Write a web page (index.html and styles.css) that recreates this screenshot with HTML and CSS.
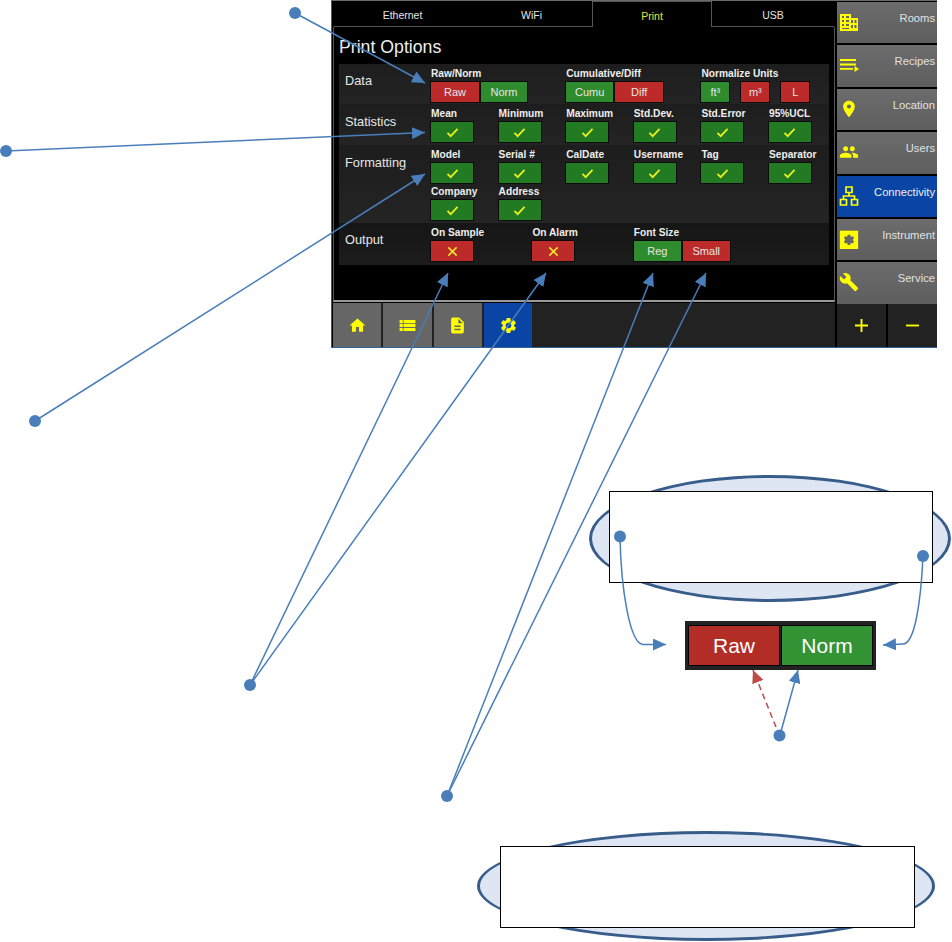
FILE: index.html
```html
<!DOCTYPE html>
<html lang="en">
<head>
    <meta charset="UTF-8">
    <meta name="viewport" content="width=device-width, initial-scale=1.0">
    <title>Print Options</title>
    <link rel="stylesheet" href="styles.css">
</head>
<body>
    <svg class="defs" width="0" height="0">
        <symbol id="i-check" viewBox="0 0 14 12"><path d="M1.500 6.500 5 10 12.500 2" fill="none" stroke="#e8f020" stroke-width="2"/></symbol>
        <symbol id="i-cross" viewBox="0 0 12 12"><path d="M1.500 1.500 10.500 10.500M10.500 1.500 1.500 10.500" fill="none" stroke="#f4e62a" stroke-width="1.700"/></symbol>
    </svg>

    <div class="canvas">
        <section class="screen">
            <div class="main">
                <nav class="tabs">
                    <div class="tab tab-first">Ethernet</div>
                    <div class="tab">WiFi</div>
                    <div class="tab tab-active">Print</div>
                    <div class="tab tab-last">USB</div>
                </nav>

                <div class="content">
                    <h1 class="title">Print Options</h1>
                    <div class="panel">
                        <div class="row row-data">
                            <div class="row-label">Data</div>
                            <div class="options">
                                <div class="opt span-4">
                                    <div class="opt-label">Raw/Norm</div>
                                    <div class="btn-group">
                                        <div class="btn red w48">Raw</div>
                                        <div class="btn green w46">Norm</div>
                                    </div>
                                </div>
                                <div class="opt span-4">
                                    <div class="opt-label">Cumulative/Diff</div>
                                    <div class="btn-group">
                                        <div class="btn green w47">Cumu</div>
                                        <div class="btn red w48">Diff</div>
                                    </div>
                                </div>
                                <div class="opt span-4">
                                    <div class="opt-label">Normalize Units</div>
                                    <div class="btn-group wide">
                                        <div class="btn green w28">ft³</div>
                                        <div class="btn red w28">m³</div>
                                        <div class="btn red w28">L</div>
                                    </div>
                                </div>
                            </div>
                        </div>

                        <div class="row">
                            <div class="row-label">Statistics</div>
                            <div class="options">
                                <div class="opt span-2"><div class="opt-label">Mean</div><div class="btn green w42"><svg class="mark"><use href="#i-check"/></svg></div></div>
                                <div class="opt span-2"><div class="opt-label">Minimum</div><div class="btn green w42"><svg class="mark"><use href="#i-check"/></svg></div></div>
                                <div class="opt span-2"><div class="opt-label">Maximum</div><div class="btn green w42"><svg class="mark"><use href="#i-check"/></svg></div></div>
                                <div class="opt span-2"><div class="opt-label">Std.Dev.</div><div class="btn green w42"><svg class="mark"><use href="#i-check"/></svg></div></div>
                                <div class="opt span-2"><div class="opt-label">Std.Error</div><div class="btn green w42"><svg class="mark"><use href="#i-check"/></svg></div></div>
                                <div class="opt span-2"><div class="opt-label">95%UCL</div><div class="btn green w42"><svg class="mark"><use href="#i-check"/></svg></div></div>
                            </div>
                        </div>

                        <div class="row">
                            <div class="row-label">Formatting</div>
                            <div class="options">
                                <div class="opt span-2"><div class="opt-label">Model</div><div class="btn green w42"><svg class="mark"><use href="#i-check"/></svg></div></div>
                                <div class="opt span-2"><div class="opt-label">Serial #</div><div class="btn green w42"><svg class="mark"><use href="#i-check"/></svg></div></div>
                                <div class="opt span-2"><div class="opt-label">CalDate</div><div class="btn green w42"><svg class="mark"><use href="#i-check"/></svg></div></div>
                                <div class="opt span-2"><div class="opt-label">Username</div><div class="btn green w42"><svg class="mark"><use href="#i-check"/></svg></div></div>
                                <div class="opt span-2"><div class="opt-label">Tag</div><div class="btn green w42"><svg class="mark"><use href="#i-check"/></svg></div></div>
                                <div class="opt span-2"><div class="opt-label">Separator</div><div class="btn green w42"><svg class="mark"><use href="#i-check"/></svg></div></div>
                                <div class="opt span-2"><div class="opt-label">Company</div><div class="btn green w42"><svg class="mark"><use href="#i-check"/></svg></div></div>
                                <div class="opt span-2"><div class="opt-label">Address</div><div class="btn green w42"><svg class="mark"><use href="#i-check"/></svg></div></div>
                            </div>
                        </div>

                        <div class="row row-output">
                            <div class="row-label">Output</div>
                            <div class="options">
                                <div class="opt span-3"><div class="opt-label">On Sample</div><div class="btn red w42"><svg class="mark"><use href="#i-cross"/></svg></div></div>
                                <div class="opt span-3"><div class="opt-label">On Alarm</div><div class="btn red w42"><svg class="mark"><use href="#i-cross"/></svg></div></div>
                                <div class="opt span-6">
                                    <div class="opt-label">Font Size</div>
                                    <div class="btn-group">
                                        <div class="btn green w47">Reg</div>
                                        <div class="btn red w47">Small</div>
                                    </div>
                                </div>
                            </div>
                        </div>
                    </div>
                </div>

                <div class="bottom-bar">
                    <div class="bar-btn"><svg class="icon" viewBox="0 0 24 24"><path d="M10 20v-6h4v6h5v-8h3L12 3 2 12h3v8z"/></svg></div>
                    <div class="bar-btn"><svg class="icon" viewBox="0 0 24 24"><path d="M2 14h4v-4H2v4zm0 5h4v-4H2v4zM2 9h4V5H2v4zm5 5h15v-4H7v4zm0 5h15v-4H7v4zM7 5v4h15V5H7z"/></svg></div>
                    <div class="bar-btn"><svg class="icon" viewBox="0 0 24 24"><path d="M14 2H6c-1.100 0-1.990.9-1.990 2L4 20c0 1.100.89 2 1.990 2H18c1.100 0 2-.9 2-2V8l-6-6zm2 16H8v-2h8v2zm0-4H8v-2h8v2zm-3-5V3.500L18.500 9H13z"/></svg></div>
                    <div class="bar-btn blue"><svg class="icon" viewBox="0 0 24 24"><path d="M19.140 12.940c.04-.3.06-.61.06-.94 0-.32-.02-.64-.07-.94l2.030-1.580a.49.49 0 0 0 .12-.61l-1.920-3.320a.488.488 0 0 0-.59-.22l-2.390.96c-.5-.38-1.030-.7-1.620-.94l-.36-2.540a.484.484 0 0 0-.48-.41h-3.840c-.24 0-.43.17-.47.41l-.36 2.540c-.59.24-1.130.57-1.620.94l-2.390-.96c-.22-.08-.47 0-.59.22L2.740 8.870c-.12.21-.08.47.12.61l2.030 1.580c-.05.3-.09.63-.09.94s.02.64.07.94l-2.030 1.580a.49.49 0 0 0-.12.61l1.920 3.320c.12.22.37.29.59.22l2.390-.96c.5.38 1.030.7 1.620.94l.36 2.540c.05.24.24.41.48.41h3.840c.24 0 .44-.17.47-.41l.36-2.540c.59-.24 1.130-.56 1.620-.94l2.390.96c.22.08.47 0 .59-.22l1.920-3.320c.12-.22.07-.47-.12-.61l-2.010-1.580zM12 15.600c-1.980 0-3.600-1.620-3.600-3.600s1.620-3.600 3.600-3.600 3.600 1.620 3.600 3.600-1.620 3.600-3.600 3.600z"/></svg></div>
                </div>
            </div>

            <aside class="sidebar">
                <div class="side-item">
                    <svg class="side-icon" viewBox="0 0 20 20"><path fill-rule="evenodd" d="M1 2h11v4h7v13H1zM3 4v2h2V4zm4 0v2h3V4zM3 8v2h2V8zm4 0v2h3V8zM3 12v2h2v-2zm4 0v2h3v-2zm5-4v3h2V8zm3.500 0v3h2V8zm-3.500 5v3h2v-3zm3.500 0v3h2v-3zM3 17h7v-1H3z"/></svg>
                    <span class="side-label">Rooms</span>
                </div>
                <div class="side-item">
                    <svg class="side-icon" viewBox="0 0 20 20"><path d="M1 4h16v2H1zM1 8.500h16v2H1zM1 13h13v1.700H1zM15.500 11l4.500 3-4.500 3z"/></svg>
                    <span class="side-label">Recipes</span>
                </div>
                <div class="side-item">
                    <svg class="side-icon" viewBox="0 0 24 24"><path d="M12 2C8.130 2 5 5.130 5 9c0 5.250 7 13 7 13s7-7.750 7-13c0-3.870-3.130-7-7-7zm0 9.500a2.500 2.500 0 0 1 0-5 2.500 2.500 0 0 1 0 5z"/></svg>
                    <span class="side-label">Location</span>
                </div>
                <div class="side-item">
                    <svg class="side-icon" viewBox="0 0 24 24"><path d="M16 11c1.660 0 2.990-1.340 2.990-3S17.660 5 16 5c-1.660 0-3 1.340-3 3s1.340 3 3 3zm-8 0c1.660 0 2.990-1.340 2.990-3S9.660 5 8 5C6.340 5 5 6.340 5 8s1.340 3 3 3zm0 2c-2.330 0-7 1.170-7 3.500V19h14v-2.500c0-2.330-4.670-3.500-7-3.500zm8 0c-.29 0-.62.02-.97.05 1.160.84 1.970 1.970 1.970 3.450V19h6v-2.500c0-2.330-4.670-3.500-7-3.500z"/></svg>
                    <span class="side-label">Users</span>
                </div>
                <div class="side-item blue">
                    <svg class="side-icon" viewBox="0 0 20 20"><path fill="none" stroke="#ff0" stroke-width="1.700" d="M7 1h6v5.500H7zM1.500 13.500h6V19h-6zM12.500 13.500h6V19h-6zM10 6.500V10M4.500 13.500V10h11v3.500"/></svg>
                    <span class="side-label">Connectivity</span>
                </div>
                <div class="side-item">
                    <svg class="side-icon" viewBox="0 0 24 24">
                        <path d="M1 2h22v22H1z"/>
                        <path fill="#666" transform="translate(4.200 5.200) scale(.65)" d="M19.140 12.940c.04-.3.06-.61.06-.94 0-.32-.02-.64-.07-.94l2.030-1.580a.49.49 0 0 0 .12-.61l-1.920-3.320a.488.488 0 0 0-.59-.22l-2.390.96c-.5-.38-1.030-.7-1.620-.94l-.36-2.540a.484.484 0 0 0-.48-.41h-3.840c-.24 0-.43.17-.47.41l-.36 2.540c-.59.24-1.130.57-1.620.94l-2.390-.96c-.22-.08-.47 0-.59.22L2.740 8.870c-.12.21-.08.47.12.61l2.030 1.580c-.05.3-.09.63-.09.94s.02.64.07.94l-2.030 1.580a.49.49 0 0 0-.12.61l1.920 3.320c.12.22.37.29.59.22l2.390-.96c.5.38 1.030.7 1.620.94l.36 2.540c.05.24.24.41.48.41h3.840c.24 0 .44-.17.47-.41l.36-2.540c.59-.24 1.130-.56 1.620-.94l2.390.96c.22.08.47 0 .59-.22l1.920-3.320c.12-.22.07-.47-.12-.61l-2.010-1.580z"/>
                    </svg>
                    <span class="side-label">Instrument</span>
                </div>
                <div class="side-item">
                    <svg class="side-icon" viewBox="0 0 24 24"><path d="M22.700 19l-9.100-9.100c.9-2.300.4-5-1.500-6.900-2-2-5-2.400-7.400-1.300L9 6 6 9 1.600 4.700C.4 7.100.9 10.100 2.900 12.100c1.900 1.900 4.600 2.400 6.900 1.500l9.100 9.100c.4.4 1 .4 1.400 0l2.300-2.300c.5-.4.5-1.100.1-1.400z"/></svg>
                    <span class="side-label">Service</span>
                </div>
                <div class="zoom-btns">
                    <div class="zoom-btn"><svg class="zoom-icon" viewBox="0 0 14 14"><path d="M6 0h2v6h6v2H8v6H6V8H0V6h6z"/></svg></div>
                    <div class="zoom-btn"><svg class="zoom-icon" viewBox="0 0 14 14"><path d="M0 6h14v2H0z"/></svg></div>
                </div>
            </aside>
        </section>

        <div class="callout callout-top"><div class="callout-box box-top"></div></div>
        <div class="callout callout-bottom"><div class="callout-box box-bottom"></div></div>

        <div class="toggle-sample">
            <div class="big-btn big-red">Raw</div>
            <div class="big-btn big-green">Norm</div>
        </div>

        <svg class="arrows" viewBox="0 0 952 942">
            <defs>
                <marker id="head" markerUnits="userSpaceOnUse" markerWidth="13" markerHeight="12" refX="13" refY="6" orient="auto"><path d="M0 0 13 6 0 12z" fill="#4a7ebb"/></marker>
                <marker id="head-red" markerUnits="userSpaceOnUse" markerWidth="13" markerHeight="12" refX="13" refY="6" orient="auto"><path d="M0 0 13 6 0 12z" fill="#be4b48"/></marker>
            </defs>
            <g class="leader">
                <path d="M295 13 425 83" marker-end="url(#head)"/>
                <path d="M6 151 425 132.500" marker-end="url(#head)"/>
                <path d="M35 421 425 174" marker-end="url(#head)"/>
                <path d="M250 685 448 273" marker-end="url(#head)"/>
                <path d="M250 685 546 273" marker-end="url(#head)"/>
                <path d="M447 796 653 273" marker-end="url(#head)"/>
                <path d="M447 796 706 273" marker-end="url(#head)"/>
                <path d="M620 537C621 590 630 644 643 644.500L666 644.500" marker-end="url(#head)"/>
                <path d="M923 556C921 600 915 644 903 644L883 645" marker-end="url(#head)"/>
                <path d="M780 735 798 670" marker-end="url(#head)"/>
            </g>
            <path class="leader-red" d="M776 727 753 670" marker-end="url(#head-red)"/>
            <g class="dots">
                <circle cx="295" cy="13" r="6"/>
                <circle cx="6" cy="151" r="6"/>
                <circle cx="35" cy="421" r="6"/>
                <circle cx="250" cy="685" r="6"/>
                <circle cx="447" cy="796" r="6"/>
                <circle cx="620" cy="536.500" r="6"/>
                <circle cx="923" cy="556" r="6"/>
                <circle cx="779.500" cy="735.500" r="6"/>
            </g>
        </svg>
    </div>
</body>
</html>
```

FILE: styles.css
```css
/* General */
* {
    margin: 0;
    padding: 0;
    box-sizing: border-box;
    font-family: 'Liberation Sans', Arial, sans-serif;
}

body {
    background: #fff;
    overflow: hidden;
}

.defs {
    position: absolute;
}

.canvas {
    position: relative;
    width: 952px;
    height: 942px;
    overflow: hidden;
}

/* Device screen */
.screen {
    position: absolute;
    left: 331px;
    top: 0;
    width: 606px;
    height: 348px;
    display: flex;
    background: #000;
    border-left: 1px solid #2f6192;
    border-top: 1px solid #6a6a6a;
    border-bottom: 1px solid #2f6192;
    color: #fff;
}

.main {
    width: 502px;
    margin-left: 1px;
    display: flex;
    flex-direction: column;
}

/* Tabs */
.tabs {
    display: flex;
    height: 26px;
    flex-shrink: 0;
    padding-left: 1px;
}

.tab {
    width: 121px;
    padding-top: 8px;
    text-align: center;
    font-size: 10.500px;
    color: #e4e4e4;
    border-bottom: 1px solid #555;
}

.tab-first {
    width: 137px;
}

.tab-active {
    width: 120px;
    color: #e8e83a;
    border: 1px solid #555;
    border-bottom: none;
}

.tab-last {
    width: 122px;
}

.content {
    height: 275px;
    padding: 0 4px 0 5px;
    border-left: 1px solid #555;
    border-right: 1px solid #555;
    border-bottom: 2px solid #999;
}

.title {
    height: 37px;
    padding-top: 10px;
    font-size: 17.700px;
    line-height: 20px;
    font-weight: normal;
    color: #eee;
}

/* Options panel */
.panel {
    width: 490px;
    background: #1f1f1f;
}

.row {
    display: flex;
    padding: 4px 0 3px;
    background: linear-gradient(to bottom, #1d1d1d, #242424);
}

.row-data {
    padding-bottom: 2px;
}

.row-output {
    padding-bottom: 4px;
    background: linear-gradient(to bottom, #161616, #1c1c1c);
}

.row-label {
    width: 92px;
    padding: 6px 0 0 6px;
    flex-shrink: 0;
    font-size: 12.800px;
    line-height: 16px;
    color: #e6e6e6;
}

.row-data .row-label,
.row-output .row-label {
    padding-top: 5px;
}

.options {
    display: grid;
    grid-template-columns: repeat(12, 33.800px);
    row-gap: 3px;
}

.opt {
    display: flex;
    flex-direction: column;
    gap: 2px;
}

.span-2 { grid-column: span 2; }
.span-3 { grid-column: span 3; }
.span-4 { grid-column: span 4; }
.span-6 { grid-column: span 6; }

.opt-label {
    height: 12px;
    font-size: 10.200px;
    line-height: 12px;
    font-weight: bold;
    color: #eee;
    white-space: nowrap;
}

.btn-group {
    display: flex;
    gap: 2px;
}

.btn-group.wide {
    gap: 12px;
}

.btn {
    height: 20px;
    display: flex;
    align-items: center;
    justify-content: center;
    font-size: 11px;
    color: #e6e6e6;
    box-shadow: 0 0 0 1px #0c0c0c;
}

.red { background: #bc2a2a; }
.green { background: #2f8c2e; }

.w28 { width: 28px; }
.w42 { width: 42px; }
.w46 { width: 46px; }
.w47 { width: 47px; }
.w48 { width: 48px; }

.w42.green { background: #227a22; }

.mark {
    width: 13px;
    height: 11px;
}

/* Bottom bar */
.bottom-bar {
    flex: 1;
    display: flex;
    gap: 2px;
    margin-top: 1px;
    background: #222;
}

.bar-btn {
    width: 48.300px;
    display: flex;
    align-items: center;
    justify-content: center;
    background: #666;
}

.blue {
    background: #0a44a4;
}

.icon {
    width: 19px;
    height: 19px;
    fill: #ff0;
}

/* Sidebar */
.sidebar {
    width: 100px;
    margin-left: 2px;
    display: flex;
    flex-direction: column;
    gap: 2px;
    padding-top: 1px;
}

.side-item {
    height: 41.400px;
    display: flex;
    justify-content: space-between;
    padding: 11px 2px 0;
    background: linear-gradient(to bottom, #6c6c6c, #5e5e5e);
    font-size: 11.200px;
    color: #e2e2e2;
}

.side-item.blue {
    background: #0a44a4;
    color: #f0f0f0;
}

.side-icon {
    width: 20px;
    height: 20px;
    margin-top: -1px;
    fill: #ff0;
}

.side-label {
    line-height: 11px;
}

.zoom-btns {
    flex: 1;
    display: flex;
    gap: 2px;
    margin-top: -2px;
    background: #000;
}

.zoom-btn {
    flex: 1;
    display: flex;
    align-items: center;
    justify-content: center;
    background: #222;
}

.zoom-icon {
    width: 13px;
    height: 13px;
    fill: #ff0;
}

/* Callouts */
.callout {
    position: absolute;
    display: flex;
    align-items: center;
    justify-content: center;
    background: #dee6f3;
    border: 3px solid #385d8a;
    border-radius: 50%;
}

.callout-top {
    left: 589px;
    top: 475px;
    width: 362px;
    height: 127px;
}

.callout-bottom {
    left: 477px;
    top: 831px;
    width: 458px;
    height: 110px;
}

.callout-box {
    flex-shrink: 0;
    background: #fff;
    border: 1.500px solid #000;
}

.box-top {
    width: 324px;
    height: 92px;
    margin: -3px 0 0 2px;
}

.box-bottom {
    width: 415px;
    height: 82px;
    margin: 2px 0 0 3px;
}

/* Enlarged Raw/Norm toggle */
.toggle-sample {
    position: absolute;
    left: 685px;
    top: 621px;
    width: 191px;
    height: 49px;
    display: flex;
    gap: 3px;
    padding: 5px 4px;
    background: #222;
}

.big-btn {
    flex: 1;
    display: flex;
    align-items: center;
    justify-content: center;
    font-size: 21px;
    color: #fff;
    box-shadow: 0 0 0 1px #000;
}

.big-red { background: #b32d27; }
.big-green { background: #349435; }

/* Leader lines */
.arrows {
    position: absolute;
    left: 0;
    top: 0;
    width: 952px;
    height: 942px;
    pointer-events: none;
}

.leader path {
    fill: none;
    stroke: #4a7ebb;
    stroke-width: 1.500;
}

.leader-red {
    fill: none;
    stroke: #be4b48;
    stroke-width: 1.500;
    stroke-dasharray: 6 4;
}

.dots circle {
    fill: #4a7ebb;
}
```
